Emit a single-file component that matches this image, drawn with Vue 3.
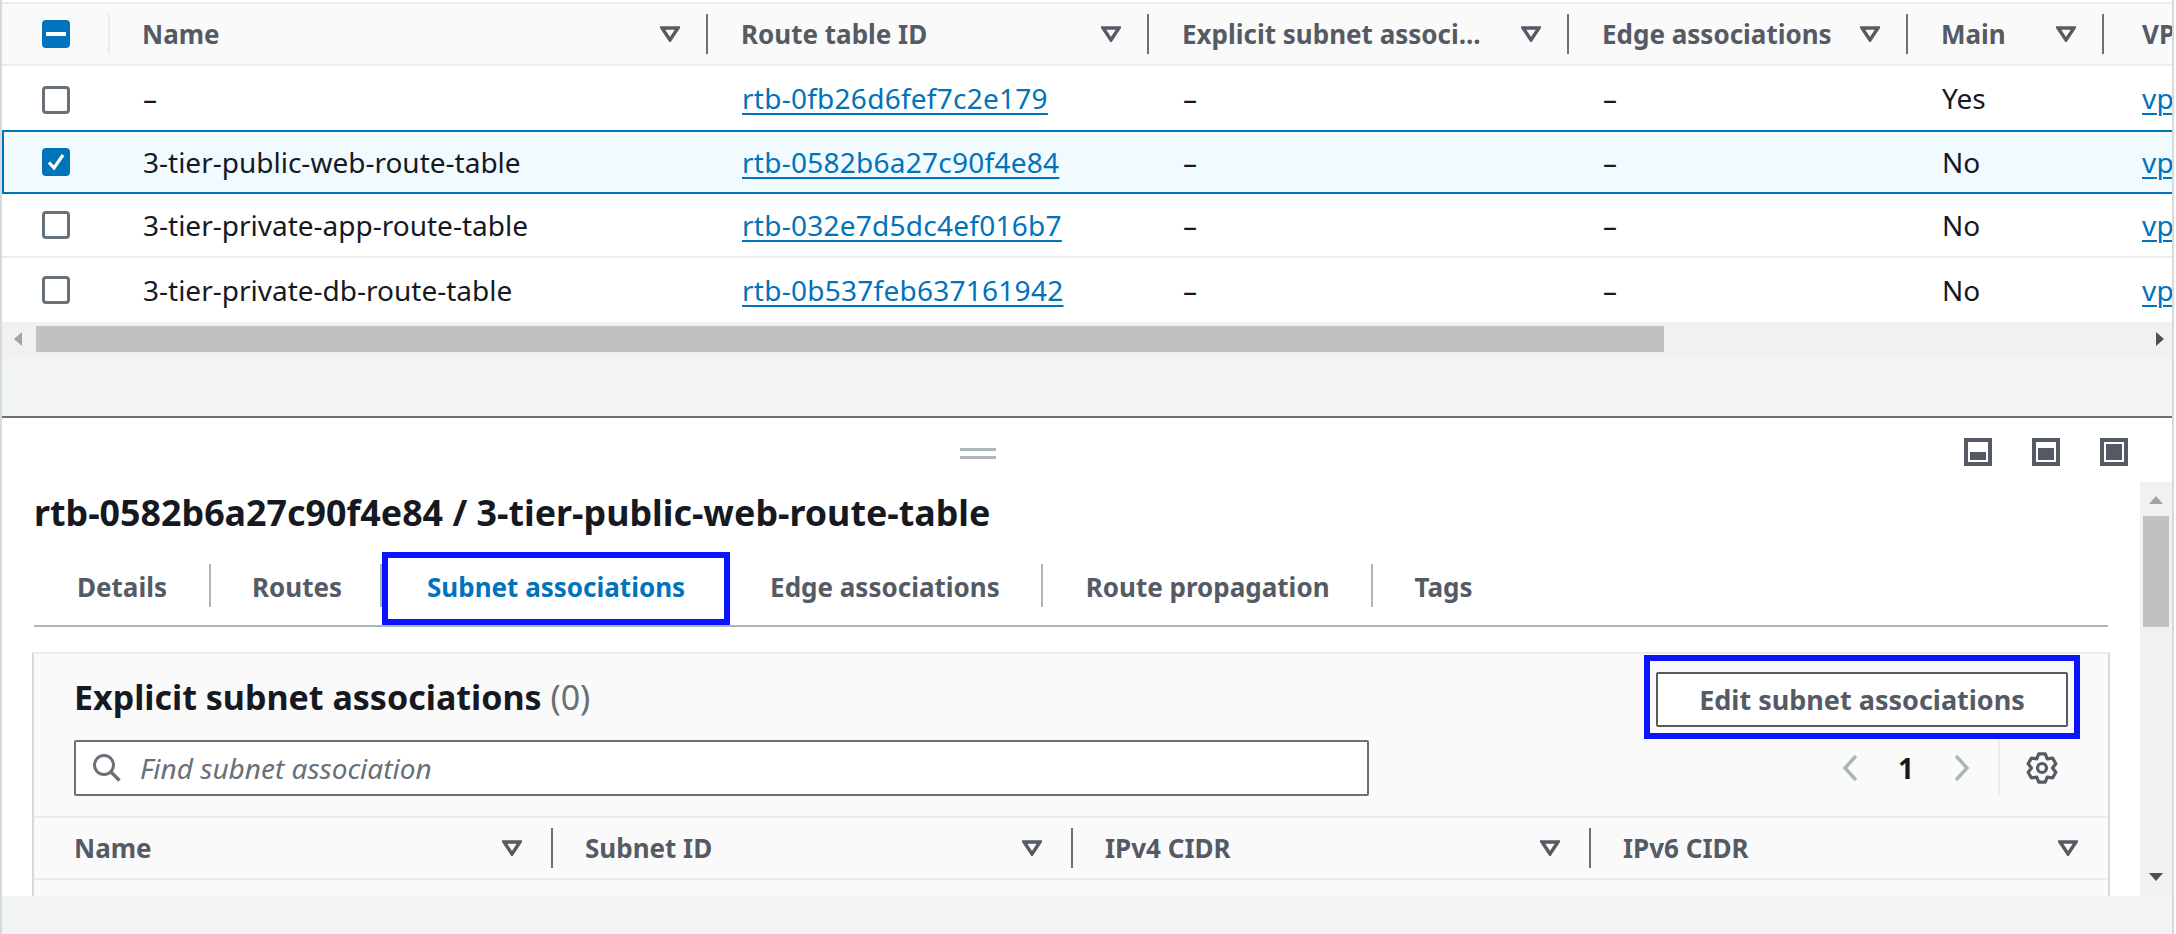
<script setup>
const cols = [
  { label: 'Name', width: 598 },
  { label: 'Route table ID', width: 441 },
  { label: 'Explicit subnet associ...', width: 420 },
  { label: 'Edge associations', width: 339 },
  { label: 'Main', width: 196 }
]
const rows = [
  { name: '–', id: 'rtb-0fb26d6fef7c2e179', main: 'Yes', selected: false },
  { name: '3-tier-public-web-route-table', id: 'rtb-0582b6a27c90f4e84', main: 'No', selected: true },
  { name: '3-tier-private-app-route-table', id: 'rtb-032e7d5dc4ef016b7', main: 'No', selected: false },
  { name: '3-tier-private-db-route-table', id: 'rtb-0b537feb637161942', main: 'No', selected: false }
]
const tabs = ['Details', 'Routes', 'Subnet associations', 'Edge associations', 'Route propagation', 'Tags']
const subCols = [
  { label: 'Name', width: 519 },
  { label: 'Subnet ID', width: 520 },
  { label: 'IPv4 CIDR', width: 518 },
  { label: 'IPv6 CIDR', width: 517 }
]
const modes = [
  { top: 14, h: 8 },
  { top: 10, h: 12 },
  { top: 6, h: 16 }
]
let gear = ''
for (let k = 0; k < 6; k++) {
  const a = (k * Math.PI) / 3 - Math.PI / 2
  const pt = (r, d) => {
    const t = a + (d * Math.PI) / 180
    return `${(16 + r * Math.cos(t)).toFixed(2)} ${(16 + r * Math.sin(t)).toFixed(2)}`
  }
  gear += `${k ? 'L' : 'M'}${pt(14.5, -13)} L${pt(14.5, 13)} L${pt(10.5, 30)} `
}
gear += 'Z'
</script>

<template>
  <div class="page">
    <div class="top-table">
      <div class="row head">
        <div class="check-cell check-head">
          <span class="box on"><span class="minus"></span></span>
        </div>
        <div v-for="c in cols" :key="c.label" class="hcell" :style="{ width: c.width + 'px' }">
          <span class="htext">{{ c.label }}</span>
          <svg class="caret" width="20" height="16" viewBox="0 0 20 16"><path d="M2 2h16l-8 12z" fill="none" stroke="#545b64" stroke-width="3.4" /></svg>
        </div>
        <div class="hcell last"><span class="htext">VPC</span></div>
      </div>
      <div v-for="r in rows" :key="r.id" class="row body" :class="{ selected: r.selected }">
        <div class="check-cell">
          <span class="box" :class="{ on: r.selected }">
            <svg v-if="r.selected" width="22" height="22" viewBox="0 0 22 22"><path d="M4 11.5l5 5.5 9-13" fill="none" stroke="#fff" stroke-width="3.2" /></svg>
          </span>
        </div>
        <div class="cell first" :style="{ width: '598px' }">{{ r.name }}</div>
        <div class="cell" :style="{ width: '441px' }"><a class="link">{{ r.id }}</a></div>
        <div class="cell" :style="{ width: '420px' }">–</div>
        <div class="cell" :style="{ width: '339px' }">–</div>
        <div class="cell" :style="{ width: '196px' }">{{ r.main }}</div>
        <div class="cell last"><a class="link">vpc</a></div>
      </div>
    </div>

    <div class="hscroll">
      <svg class="arrow" width="8" height="14" viewBox="0 0 8 14"><path d="M8 0v14L0 7z" fill="#a3a3a3" /></svg>
      <div class="hthumb"></div>
      <svg class="arrow right" width="8" height="14" viewBox="0 0 8 14"><path d="M0 0v14l8-7z" fill="#505050" /></svg>
    </div>

    <div class="gap"></div>

    <div class="panel">
      <div class="panel-head">
        <div class="handle"><span></span><span></span></div>
        <div class="modes">
          <span v-for="(m, i) in modes" :key="i" class="mode"><i :style="{ top: m.top + 'px', height: m.h + 'px' }"></i></span>
        </div>
      </div>
      <div class="panel-body">
        <div class="content">
          <h2 class="title">rtb-0582b6a27c90f4e84 / 3-tier-public-web-route-table</h2>
          <div class="tabs">
            <div v-for="t in tabs" :key="t" class="tab" :class="{ active: t === 'Subnet associations' }">
              <span>{{ t }}</span>
            </div>
          </div>
          <section class="card">
            <div class="card-top">
              <div class="card-left">
                <h3 class="card-title">Explicit subnet associations <span class="count">(0)</span></h3>
                <div class="search">
                  <svg width="30" height="30" viewBox="0 0 30 30"><circle cx="12" cy="12" r="9.5" fill="none" stroke="#687078" stroke-width="3" /><path d="M19 19l8.5 8.5" stroke="#687078" stroke-width="3.4" /></svg>
                  <span>Find subnet association</span>
                </div>
              </div>
              <div class="card-right">
                <div class="mark"><button class="btn">Edit subnet associations</button></div>
                <div class="pager">
                  <svg width="16" height="28" viewBox="0 0 16 28"><path d="M14 2L3 14l11 12" fill="none" stroke="#aab7b8" stroke-width="3.4" /></svg>
                  <b>1</b>
                  <svg width="16" height="28" viewBox="0 0 16 28"><path d="M2 2l11 12L2 26" fill="none" stroke="#aab7b8" stroke-width="3.4" /></svg>
                  <div class="gear-wrap">
                    <svg width="32" height="32" viewBox="0 0 32 32"><path :d="gear" fill="none" stroke="#545b64" stroke-width="3.2" stroke-linejoin="round" /><circle cx="16" cy="16" r="4.5" fill="none" stroke="#545b64" stroke-width="3.2" /></svg>
                  </div>
                </div>
              </div>
            </div>
            <div class="sub-head">
              <div v-for="(c, i) in subCols" :key="c.label" class="sub-cell" :class="{ end: i === 3 }" :style="{ width: c.width + 'px' }">
                <span class="htext">{{ c.label }}</span>
                <svg class="caret" width="20" height="16" viewBox="0 0 20 16"><path d="M2 2h16l-8 12z" fill="none" stroke="#545b64" stroke-width="3.4" /></svg>
              </div>
            </div>
          </section>
        </div>
        <div class="vscroll">
          <svg width="14" height="8" viewBox="0 0 14 8"><path d="M0 8h14L7 0z" fill="#a3a3a3" /></svg>
          <div class="vthumb"></div>
          <svg class="down" width="14" height="8" viewBox="0 0 14 8"><path d="M0 0h14L7 8z" fill="#505050" /></svg>
        </div>
      </div>
    </div>

    <div class="foot"></div>
  </div>
</template>

<style>
html, body { margin: 0; background: #fff; overflow: hidden; }
</style>

<style scoped>
* { box-sizing: border-box; }
.page {
  width: 2174px;
  height: 934px;
  background: #f2f3f3;
  border-left: 2px solid #d5dbdb;
  border-right: 2px solid #d5dbdb;
  display: flex;
  flex-direction: column;
  overflow: hidden;
  font-family: "Noto Sans", sans-serif;
  font-size: 28px;
  color: #16191f;
}
.top-table { background: #fff; padding-top: 2px; }
.row { display: flex; align-items: center; white-space: nowrap; overflow: hidden; }
.head {
  height: 64px;
  background: #fafafa;
  border-top: 2px solid #eaeded;
  border-bottom: 2px solid #eaeded;
}
.body { height: 64px; border-bottom: 2px solid #eaeded; }
.body:nth-child(2) .box { margin-top: 4px; }
.body:has(+ .selected) { border-bottom: 0; }
.body:last-child { border-bottom: 0; }
.selected {
  background: #f1faff;
  border-top: 2px solid #0073bb;
  border-bottom: 2px solid #0073bb;
  border-left: 2px solid #0073bb;
}
.selected .check-cell { width: 106px; padding-left: 38px; }
.check-cell {
  width: 108px;
  flex: none;
  height: 40px;
  padding-left: 40px;
  display: flex;
  align-items: center;
}
.check-head { border-right: 2px solid #eaeded; }
.box {
  width: 28px;
  height: 28px;
  border: 3px solid #687078;
  border-radius: 4px;
  background: #fff;
  display: flex;
  align-items: center;
  justify-content: center;
}
.box.on { background: #0073bb; border-color: #0073bb; }
.minus { width: 20px; height: 4px; background: #fff; flex: none; }
.hcell {
  flex: none;
  height: 40px;
  padding: 0 26px 0 33px;
  border-right: 2px solid #687078;
  display: flex;
  align-items: center;
  justify-content: space-between;
}
.check-head + .hcell { padding-left: 32px; }
.hcell.last { border-right: 0; width: 120px; padding-left: 38px; }
.htext { font-size: 26px; font-weight: 700; color: #545b64; }
.caret { flex: none; }
.cell { flex: none; padding-left: 34px; }
.cell.first { padding-left: 33px; }
.cell.last { padding-left: 38px; }
.link {
  color: #0073bb;
  letter-spacing: 0.26px;
  text-decoration: underline;
  text-decoration-thickness: 2px;
  text-underline-offset: 4px;
}
.hscroll {
  height: 34px;
  background: #f1f1f1;
  display: flex;
  align-items: center;
  padding: 0 8px 0 12px;
}
.hthumb { width: 1628px; height: 26px; background: #c1c1c1; margin-left: 14px; }
.arrow.right { margin-left: auto; }
.gap { height: 60px; }
.panel {
  flex: 1;
  min-height: 0;
  background: #fff;
  border-top: 2px solid #687078;
  display: flex;
  flex-direction: column;
}
.panel-head {
  height: 64px;
  flex: none;
  display: flex;
  align-items: flex-start;
  padding: 20px 44px 0 958px;
}
.handle { margin-top: 10px; display: flex; flex-direction: column; gap: 5px; }
.handle span { display: block; width: 36px; height: 3px; background: #aab7b8; }
.modes { margin-left: auto; display: flex; gap: 40px; }
.mode { position: relative; width: 28px; height: 28px; border: 4px solid #545b64; display: block; }
.mode i { position: absolute; left: 2px; width: 16px; margin-top: -4px; background: #545b64; display: block; }
.panel-body { flex: 1; min-height: 0; display: flex; overflow: hidden; }
.content { flex: 1; min-width: 0; padding: 0 30px 0 30px; overflow: hidden; }
.title { margin: 8px 0 0 2px; font-size: 35.8px; line-height: 44px; font-weight: 700; white-space: nowrap; }
.tabs {
  display: flex;
  align-items: center;
  margin: 18px 2px 0 2px;
  height: 75px;
  border-bottom: 2px solid #aab7b8;
}
.tab {
  height: 43px;
  display: flex;
  align-items: center;
  padding: 2px 41px 0 42px;
  margin-top: -6px;
  font-size: 26px;
  font-weight: 700;
  color: #545b64;
  border-right: 2px solid #aab7b8;
  white-space: nowrap;
}
.tab:nth-child(1) { padding-left: 43px; padding-right: 42px; }
.tab:nth-child(2) { padding-left: 41px; padding-right: 38px; }
.tab:nth-child(4) { padding-left: 40px; }
.tab:nth-child(5) { padding-left: 43px; }
.tab:last-child { border-right: 0; }
.tab.active {
  height: 73px;
  margin-top: 0;
  width: 348px;
  flex: none;
  padding: 0 0 3px;
  justify-content: center;
  color: #0073bb;
  border: 6px solid #0a14ff;
}
.card {
  margin-top: 25px;
  height: 262px;
  background: #fafafa;
  border-top: 2px solid #eaeded;
  border-left: 2px solid #d5dbdb;
  border-right: 2px solid #d5dbdb;
}
.card-top { height: 164px; display: flex; justify-content: space-between; padding: 0 28px 0 40px; border-bottom: 2px solid #eaeded; }
.card-left { width: 1295px; }
.card-title { margin: 21px 0 0; font-size: 34px; line-height: 44px; font-weight: 700; white-space: nowrap; }
.count { font-weight: 400; color: #687078; }
.search {
  margin-top: 21px;
  height: 56px;
  background: #fff;
  border: 2px solid #687078;
  border-radius: 2px;
  display: flex;
  align-items: center;
  gap: 18px;
  padding-left: 16px;
  font-style: italic;
  color: #687078;
}
.card-right { width: 436px; display: flex; flex-direction: column; align-items: flex-end; }
.mark { width: 436px; flex: none; height: 84px; margin-top: 1px; border: 6px solid #0a14ff; padding: 11px 6px 6px; }
.btn {
  width: 412px;
  height: 55px;
  display: block;
  background: #fff;
  border: 2px solid #545b64;
  border-radius: 2px;
  font: 700 27px "Noto Sans", sans-serif;
  color: #545b64;
  padding: 0;
}
.pager { display: flex; align-items: center; height: 57px; margin-right: 22px; }
.pager b { width: 96px; text-align: center; font-weight: 700; }
.gear-wrap { height: 57px; margin-left: 28px; padding-left: 26px; border-left: 2px solid #eaeded; display: flex; align-items: center; }
.sub-head { height: 62px; display: flex; align-items: center; border-bottom: 2px solid #eaeded; }
.sub-cell { flex: none; height: 40px; display: flex; align-items: center; justify-content: space-between; padding: 0 29px 0 40px; border-right: 2px solid #687078; }
.sub-cell + .sub-cell { padding-left: 32px; }
.sub-cell.end { border-right: 0; padding-right: 30px; }
.vscroll {
  width: 32px;
  flex: none;
  background: #f1f1f1;
  display: flex;
  flex-direction: column;
  align-items: center;
  padding-top: 14px;
}
.vthumb { width: 26px; height: 111px; background: #c1c1c1; margin-top: 12px; flex: none; }
.down { margin-top: 246px; flex: none; }
.foot { height: 38px; flex: none; }
</style>
